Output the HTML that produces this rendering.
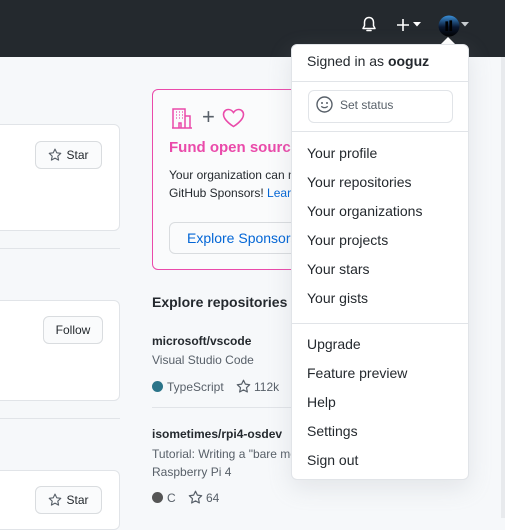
<!DOCTYPE html>
<html><head><style>
*{box-sizing:border-box;margin:0;padding:0}
body{width:505px;height:518px;overflow:hidden;background:#f6f8fa;font-family:"Liberation Sans",sans-serif;color:#24292e;position:relative;font-size:14px}
.abs{position:absolute}
.hdr{left:0;top:0;width:505px;height:57px;background:#24292e}
.card{background:#fff;border:1px solid #e1e4e8;border-radius:6px}
.btn{background:#fafbfc;border:1px solid #d9dcdf;border-radius:6px;font-size:12px;color:#24292e;display:flex;align-items:center;justify-content:center;gap:4px}
.hr{height:1px;background:#e1e4e8}
.dd{left:291px;top:44px;width:178px;height:436px;background:#fff;border:1px solid #e1e4e8;border-radius:6px;box-shadow:0 8px 24px rgba(149,157,165,.2)}
.it{position:absolute;left:15px;font-size:14px;color:#24292e;line-height:18px}
.sep{position:absolute;left:0;width:176px;height:1px;background:#e1e4e8}
</style></head><body>
<div class="abs hdr"></div>
<svg class="abs" style="left:361px;top:16px" width="16" height="18" viewBox="0 0 16 18"><path d="M8 1.5c-2.6 0-4.5 2-4.5 4.6v3.6L2 12.5h12l-1.5-2.8V6.1C12.5 3.5 10.6 1.5 8 1.5z" fill="none" stroke="#fff" stroke-width="1.5" stroke-linejoin="round"/><path d="M6 14.5h4" stroke="#fff" stroke-width="1.6" stroke-linecap="round"/></svg>
<svg class="abs" style="left:396px;top:18px" width="14" height="14" viewBox="0 0 14 14"><path d="M7 1v12M1 7h12" stroke="#fff" stroke-width="1.6"/></svg>
<svg class="abs" style="left:413px;top:22px" width="8" height="5"><path d="M0 0h8L4 4.5z" fill="#fff"/></svg>
<svg class="abs" style="left:438px;top:15px" width="22" height="22" viewBox="0 0 22 22"><defs><linearGradient id="g" x1="0" y1="0" x2="0" y2="1"><stop offset="0" stop-color="#3a8fd8"/><stop offset=".55" stop-color="#0a1730"/><stop offset="1" stop-color="#000"/></linearGradient></defs><circle cx="11" cy="11" r="10.5" fill="url(#g)"/><path d="M8 16V7h1.5v9M12 16V6h1.5v10" stroke="#000" stroke-width="1.2"/></svg>
<svg class="abs" style="left:461px;top:22px" width="8" height="5"><path d="M0 0h8L4 4.5z" fill="#c9cdd1"/></svg>
<div class="abs card" style="left:-10px;top:124px;width:130px;height:107px"></div>
<div class="abs btn" style="left:35px;top:141px;width:67px;height:28px"><svg width="14" height="14" viewBox="0 0 16 16"><path d="M8 1.3l2 4.2 4.6.6-3.4 3.2.9 4.5L8 11.6l-4.1 2.2.9-4.5L1.4 6.1 6 5.5z" fill="none" stroke="#586069" stroke-width="1.3" stroke-linejoin="round"/></svg>Star</div>
<div class="abs hr" style="left:0;top:248px;width:120px"></div>
<div class="abs card" style="left:-10px;top:300px;width:130px;height:101px"></div>
<div class="abs btn" style="left:43px;top:316px;width:60px;height:28px">Follow</div>
<div class="abs hr" style="left:0;top:418px;width:120px"></div>
<div class="abs card" style="left:-10px;top:470px;width:130px;height:60px"></div>
<div class="abs btn" style="left:35px;top:486px;width:67px;height:28px"><svg width="14" height="14" viewBox="0 0 16 16"><path d="M8 1.3l2 4.2 4.6.6-3.4 3.2.9 4.5L8 11.6l-4.1 2.2.9-4.5L1.4 6.1 6 5.5z" fill="none" stroke="#586069" stroke-width="1.3" stroke-linejoin="round"/></svg>Star</div>
<div class="abs" style="left:152px;top:89px;width:160px;height:181px;border:1px solid #ea4aaa;border-radius:6px;background:#fafbfc"></div>
<svg class="abs" style="left:171px;top:107px" width="22" height="22" viewBox="0 0 22 22"><path d="M2 21V2h12v19M14 9h5v12M1 21h20M8 21v-5h2v5" fill="none" stroke="#ea4aaa" stroke-width="1.5"/><path d="M5 5h1M8 5h1M11 5h1M5 8h1M8 8h1M11 8h1M5 11h1M8 11h1M11 11h1" stroke="#ea4aaa" stroke-width="1.2"/></svg>
<div class="abs" style="left:202px;top:104px;font-size:22px;color:#586069">+</div>
<svg class="abs" style="left:222px;top:108px" width="23" height="20" viewBox="0 0 23 20"><path d="M11.5 18.5S1.5 12.5 1.5 6.5C1.5 3.5 3.8 1.5 6.3 1.5c2.3 0 4 1.3 5.2 3 1.2-1.7 2.9-3 5.2-3 2.5 0 4.8 2 4.8 5 0 6-10 12-10 12z" fill="none" stroke="#ea4aaa" stroke-width="1.6"/></svg>
<div class="abs" style="left:169px;top:139px;font-size:15px;font-weight:bold;color:#ea4aaa;white-space:nowrap">Fund open source</div>
<div class="abs" style="left:169px;top:166px;font-size:12px;line-height:18px;white-space:nowrap">Your organization can m<br>GitHub Sponsors! <span style="color:#0366d6">Learn</span></div>
<div class="abs btn" style="left:169px;top:222px;width:140px;height:32px;justify-content:flex-start;padding-left:17px;font-size:14px;color:#0366d6">Explore Sponsors</div>
<div class="abs" style="left:152px;top:294px;font-size:14px;font-weight:bold">Explore repositories</div>
<div class="abs" style="left:152px;top:334px;font-size:12px;font-weight:bold">microsoft/vscode</div>
<div class="abs" style="left:152px;top:353px;font-size:12px;color:#586069">Visual Studio Code</div>
<div class="abs" style="left:152px;top:381px;width:11px;height:11px;border-radius:50%;background:#2b7489"></div>
<div class="abs" style="left:167px;top:380px;font-size:12px;color:#586069">TypeScript</div>
<svg class="abs" style="left:236px;top:379px" width="15" height="15" viewBox="0 0 16 16"><path d="M8 1.3l2 4.2 4.6.6-3.4 3.2.9 4.5L8 11.6l-4.1 2.2.9-4.5L1.4 6.1 6 5.5z" fill="none" stroke="#586069" stroke-width="1.3" stroke-linejoin="round"/></svg>
<div class="abs" style="left:254px;top:380px;font-size:12px;color:#586069">112k</div>
<div class="abs hr" style="left:152px;top:407px;width:140px"></div>
<div class="abs" style="left:152px;top:427px;font-size:12px;font-weight:bold">isometimes/rpi4-osdev</div>
<div class="abs" style="left:152px;top:445px;font-size:12px;color:#586069;line-height:18px;white-space:nowrap">Tutorial: Writing a "bare me<br>Raspberry Pi 4</div>
<div class="abs" style="left:152px;top:492px;width:11px;height:11px;border-radius:50%;background:#555"></div>
<div class="abs" style="left:167px;top:491px;font-size:12px;color:#586069">C</div>
<svg class="abs" style="left:188px;top:490px" width="15" height="15" viewBox="0 0 16 16"><path d="M8 1.3l2 4.2 4.6.6-3.4 3.2.9 4.5L8 11.6l-4.1 2.2.9-4.5L1.4 6.1 6 5.5z" fill="none" stroke="#586069" stroke-width="1.3" stroke-linejoin="round"/></svg>
<div class="abs" style="left:206px;top:491px;font-size:12px;color:#586069">64</div>
<div class="abs" style="left:501px;top:57px;width:4px;height:461px;background:#e8eaed"></div>
<svg class="abs" style="left:440px;top:36px" width="16" height="9"><path d="M0 9L8 1l8 8z" fill="#fff"/></svg>
<div class="abs dd">
<div class="it" style="top:7px">Signed in as <b>ooguz</b></div>
<div class="sep" style="top:36px"></div>
<div style="position:absolute;left:16px;top:45px;width:145px;height:33px;border:1px solid #e1e4e8;border-radius:6px"></div>
<svg class="abs" style="left:24px;top:51px" width="17" height="17" viewBox="0 0 17 17"><circle cx="8.5" cy="8.5" r="7.5" fill="none" stroke="#586069" stroke-width="1.4"/><circle cx="6" cy="7" r="1" fill="#586069"/><circle cx="11" cy="7" r="1" fill="#586069"/><path d="M5.3 10.3c1.6 1.8 4.8 1.8 6.4 0" fill="none" stroke="#586069" stroke-width="1.3"/></svg>
<div class="it" style="left:48px;top:51px;font-size:12px;color:#586069">Set status</div>
<div class="sep" style="top:86px"></div>
<div class="it" style="top:99px">Your profile</div>
<div class="it" style="top:128px">Your repositories</div>
<div class="it" style="top:157px">Your organizations</div>
<div class="it" style="top:186px">Your projects</div>
<div class="it" style="top:215px">Your stars</div>
<div class="it" style="top:244px">Your gists</div>
<div class="sep" style="top:278px"></div>
<div class="it" style="top:290px">Upgrade</div>
<div class="it" style="top:319px">Feature preview</div>
<div class="it" style="top:348px">Help</div>
<div class="it" style="top:377px">Settings</div>
<div class="it" style="top:406px">Sign out</div>
</div>
</body></html>
